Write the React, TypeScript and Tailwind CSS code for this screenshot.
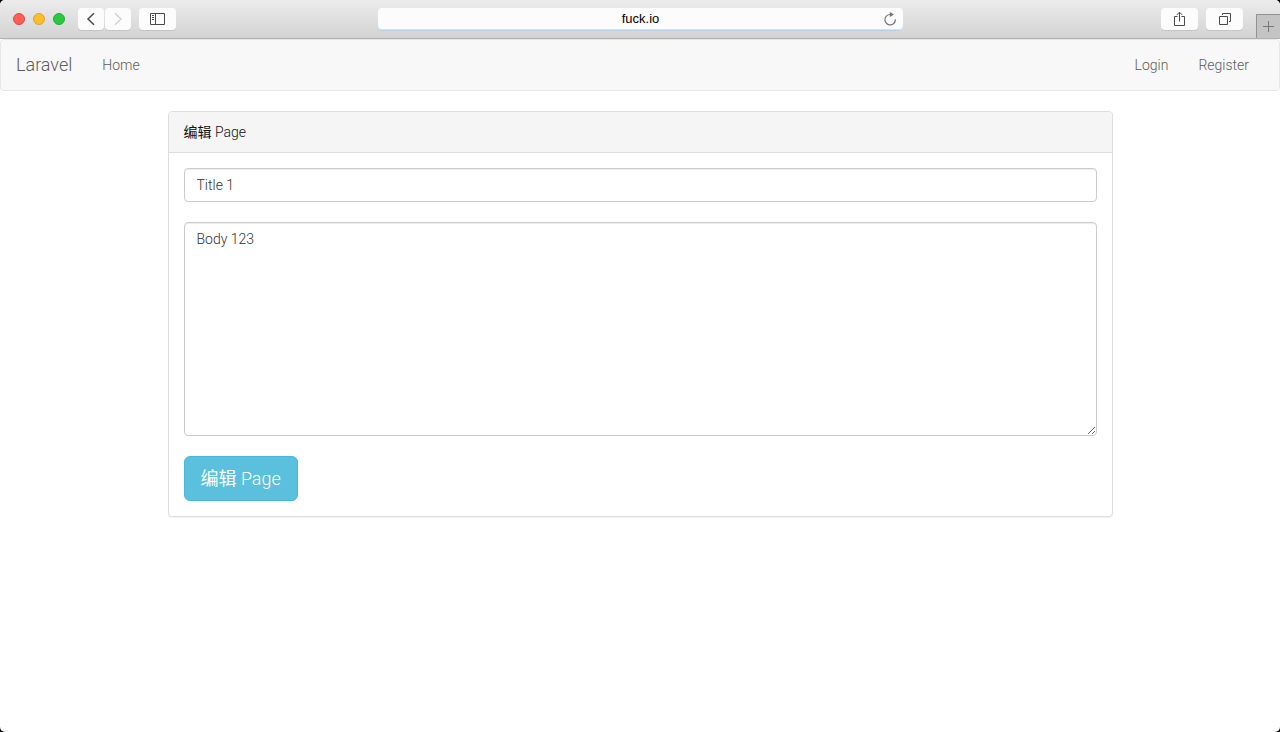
import type { ReactNode } from "react";

const toolButton =
  "flex h-[22px] items-center justify-center rounded bg-[#fcfcfc] text-[#4a4a4a] shadow-[0_1px_0_#c4c4c4]";

function ToolButton({ label, className, children }: { label: string; className: string; children: ReactNode }) {
  return (
    <button type="button" aria-label={label} className={`${toolButton} ${className}`}>
      {children}
    </button>
  );
}

function BrowserBar() {
  return (
    <header className="relative flex h-[39px] items-center justify-between border-b border-[#b1b1b1] bg-linear-to-b from-[#ececec] to-[#d3d3d3] pr-[37px] pl-[13px]">
      <div className="flex items-center">
        <div className="flex gap-2">
          <span className="size-3 rounded-full border border-[#e2463f] bg-[#ff5f57]" />
          <span className="size-3 rounded-full border border-[#e1a325] bg-[#ffbd2e]" />
          <span className="size-3 rounded-full border border-[#1fae34] bg-[#28c940]" />
        </div>
        <div className="ml-[13px] flex gap-px">
          <ToolButton label="Back" className="w-[26px]">
            <svg width="10" height="14" viewBox="0 0 10 14" fill="none" stroke="currentColor" strokeWidth="1.5">
              <path d="M8 1.200 2 7l6 5.800" />
            </svg>
          </ToolButton>
          <ToolButton label="Forward" className="w-[26px]">
            <svg width="10" height="14" viewBox="0 0 10 14" fill="none" stroke="#d0d0d0" strokeWidth="1.4">
              <path d="M2 1.200 8 7l-6 5.800" />
            </svg>
          </ToolButton>
        </div>
        <ToolButton label="Show sidebar" className="ml-2 w-[37px]">
          <svg width="15" height="12" viewBox="0 0 15 12" fill="none" stroke="currentColor">
            <path d="M.5.5h14v11H.5zM5.500.5v11" />
            <path d="M2 2.500h2M2 4.500h2M2 6.500h2" />
          </svg>
        </ToolButton>
      </div>

      <div className="absolute top-2 right-[377px] left-[378px] flex h-[22px] items-center rounded bg-[#fcfcfc] px-[6px] shadow-[0_1px_0_#b9cfe8] inset-shadow-[0_-1px_0_#d5e3f3]">
        <input
          aria-label="Address"
          defaultValue="fuck.io"
          className="min-w-0 flex-1 bg-transparent pl-[14px] text-center font-['Liberation_Sans',sans-serif] text-[13px] leading-5 font-normal text-black outline-none"
        />
        <button type="button" aria-label="Reload" className="text-[#747474]">
          <svg width="14" height="14" viewBox="0 0 14 14" fill="none" stroke="currentColor" strokeWidth="1.200">
            <path d="M12.300 7.200A5.200 5.200 0 1 1 7.100 2.500H8" />
            <path d="M6.800 0v5l4.200-2.500z" fill="currentColor" stroke="none" />
          </svg>
        </button>
      </div>

      <div className="flex gap-2">
        <ToolButton label="Share" className="w-[37px]">
          <svg width="11" height="16" viewBox="0 0 11 16" fill="none" stroke="currentColor">
            <path d="M3.500 5.500h-3v9h10v-9h-3M5.500 10.500V1.500M2.800 3.900l2.700-2.700 2.700 2.700" />
          </svg>
        </ToolButton>
        <ToolButton label="Show tabs" className="w-[37px]">
          <svg width="12" height="12" viewBox="0 0 12 12" fill="none" stroke="currentColor">
            <path d="M.5 3.500h8v8h-8zM3.500 2V.5h8v8H10" />
          </svg>
        </ToolButton>
      </div>

      <button
        type="button"
        aria-label="New tab"
        className="absolute right-0 bottom-0 flex h-6 w-6 items-center justify-center border-t border-l border-[#929292] bg-[#c4c4c4] text-[#777]"
      >
        <svg width="11" height="11" viewBox="0 0 11 11" stroke="currentColor">
          <path d="M5.500 0v11M0 5.500h11" />
        </svg>
      </button>
    </header>
  );
}

function SiteNav() {
  return (
    <nav className="flex min-h-[52px] items-center justify-between rounded border border-[#e7e7e7] bg-[#f8f8f8] px-[15px] text-[#5c5c5c]">
      <div className="flex items-center">
        <a href="#" className="pr-[15px] text-lg leading-5">
          Laravel
        </a>
        <a href="#home" className="px-[15px]">
          Home
        </a>
      </div>
      <div className="flex">
        <a href="#login" className="px-[15px]">
          Login
        </a>
        <a href="#register" className="px-[15px]">
          Register
        </a>
      </div>
    </nav>
  );
}

const field =
  "block w-full rounded border border-[#ccc] bg-white px-3 py-[6px] text-[#333] inset-shadow-[0_1px_1px_rgba(0,0,0,0.075)] outline-none";

function EditLabel() {
  return (
    <>
      <span className="font-normal">编辑</span> Page
    </>
  );
}

function EditForm() {
  return (
    <section className="mx-auto mt-5 w-full max-w-[945px] rounded border border-[#ddd] bg-white shadow-[0_1px_1px_rgba(0,0,0,0.05)]">
      <h1 className="rounded-t-[3px] border-b border-[#ddd] bg-[#f5f5f5] px-[15px] py-[10px] text-[#111]">
        <EditLabel />
      </h1>
      <form className="flex flex-col items-start gap-5 p-[15px]" onSubmit={(e) => e.preventDefault()}>
        <input aria-label="Title" defaultValue="Title 1" className={`${field} h-[34px]`} />
        <textarea aria-label="Body" rows={10} defaultValue="Body 123" className={`${field} resize-y`} />
        <button
          type="submit"
          className="rounded-md border border-[#46b8da] bg-[#5bc0de] px-4 py-[10px] text-lg leading-[23px] text-white"
        >
          <EditLabel />
        </button>
      </form>
    </section>
  );
}

export default function App() {
  return (
    <div className="min-h-screen bg-black font-['Roboto','Noto_Sans_CJK_SC',sans-serif] text-sm leading-5 font-light">
      <div className="min-h-screen overflow-hidden rounded-[5px] bg-white">
        <BrowserBar />
        <SiteNav />
        <main>
          <EditForm />
        </main>
      </div>
    </div>
  );
}
